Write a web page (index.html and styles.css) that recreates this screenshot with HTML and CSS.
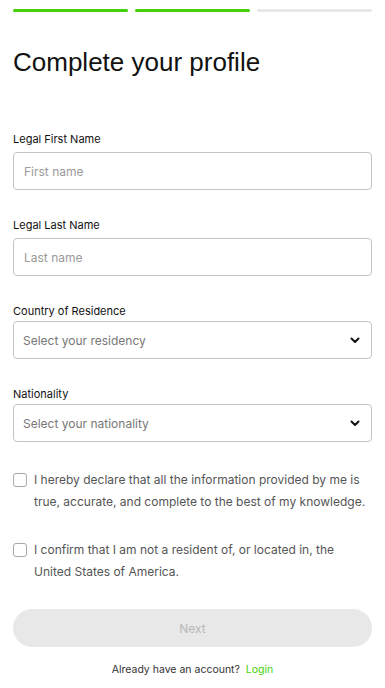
FILE: index.html
```html
<!DOCTYPE html>
<html lang="en">
<head>
    <meta charset="UTF-8">
    <meta name="viewport" content="width=device-width, initial-scale=1.0">
    <title>Complete your profile</title>
    <link rel="stylesheet" href="styles.css">
</head>
<body>
    <div class="container">
        <!-- progress -->
        <div class="steps">
            <span class="step done"></span>
            <span class="step done"></span>
            <span class="step"></span>
        </div>

        <h1 class="title">Complete your profile</h1>

        <form class="profile-form">
            <div class="field">
                <label>Legal First Name</label>
                <input type="text" placeholder="First name" />
            </div>
            <div class="field">
                <label>Legal Last Name</label>
                <input type="text" placeholder="Last name" />
            </div>
            <div class="field field-select">
                <label>Country of Residence</label>
                <div class="select-box">
                    <span>Select your residency</span>
                    <svg width="10" height="7" viewBox="0 0 10 7" fill="none" stroke="#111" stroke-width="2" stroke-linecap="round" stroke-linejoin="round">
                        <polyline points="1.5 1.5 5 5 8.5 1.5"></polyline>
                    </svg>
                </div>
            </div>
            <div class="field field-select">
                <label>Nationality</label>
                <div class="select-box">
                    <span>Select your nationality</span>
                    <svg width="10" height="7" viewBox="0 0 10 7" fill="none" stroke="#111" stroke-width="2" stroke-linecap="round" stroke-linejoin="round">
                        <polyline points="1.5 1.5 5 5 8.5 1.5"></polyline>
                    </svg>
                </div>
            </div>

            <label class="check">
                <span class="box"></span>
                <span>I hereby declare that all the information provided by me is true, accurate, and complete to the best of my knowledge.</span>
            </label>
            <label class="check">
                <span class="box"></span>
                <span>I confirm that I am not a resident of, or located in, the United States of America.</span>
            </label>

            <button type="button" class="next-btn" disabled>Next</button>
        </form>

        <p class="login">Already have an account? <a href="#">Login</a></p>
    </div>
</body>
</html>
```

FILE: styles.css
```css
:root {
    --green: #44d10a;
    --track: #e8e8e8;
    --border: #c4c4c4;
    --text: #111;
    --muted: #555;
    --placeholder: #9a9a9a;
}

body {
    margin: 0;
    padding: 0;
    background: #fff;
    color: var(--text);
    font-family: Inter, "Liberation Sans", sans-serif;
}

.container {
    padding: 9px 13px 0;
}

/* progress */
.steps {
    display: flex;
    gap: 7px;
}

.step {
    flex: 1;
    height: 3px;
    border-radius: 2px;
    background: var(--track);
}

.step.done {
    background: var(--green);
}

.title {
    margin: 35px 0 0;
    font-family: "Liberation Sans", Arial, sans-serif;
    font-size: 26px;
    font-weight: 400;
    line-height: 30px;
}

/* form */
.profile-form {
    margin-top: 55px;
}

.field {
    display: flex;
    flex-direction: column;
    margin-bottom: 28px;
}

.field label {
    font-size: 11px;
    line-height: 14px;
    margin-bottom: 6px;
}

.field-select label {
    margin-bottom: 3px;
}

.field input,
.select-box {
    box-sizing: border-box;
    height: 38px;
    padding: 0 10px;
    border: 1px solid var(--border);
    border-radius: 4px;
    font-family: inherit;
    font-size: 12px;
    color: var(--text);
}

.field input::placeholder {
    color: var(--placeholder);
}

.select-box {
    display: flex;
    align-items: center;
    justify-content: space-between;
    padding: 0 11px 0 9px;
    color: #777;
}

.field:nth-of-type(4) {
    margin-bottom: 27px;
}

.check {
    display: flex;
    gap: 7px;
    margin-bottom: 26px;
    font-size: 12px;
    line-height: 22px;
    color: var(--muted);
}

.check .box {
    flex: none;
    box-sizing: border-box;
    width: 14px;
    height: 14px;
    margin-top: 4px;
    border: 1px solid #a8a8a8;
    border-radius: 3px;
}

.next-btn {
    display: block;
    width: 100%;
    height: 38px;
    margin-top: 26px;
    border: none;
    border-radius: 19px;
    background: var(--track);
    color: #b8b8b8;
    font-family: inherit;
    font-size: 12px;
}

.login {
    margin: 16px 0 0;
    text-align: center;
    font-size: 10.5px;
    line-height: 14px;
    color: #333;
}

.login a {
    margin-left: 3px;
    color: var(--green);
    text-decoration: none;
}
```
